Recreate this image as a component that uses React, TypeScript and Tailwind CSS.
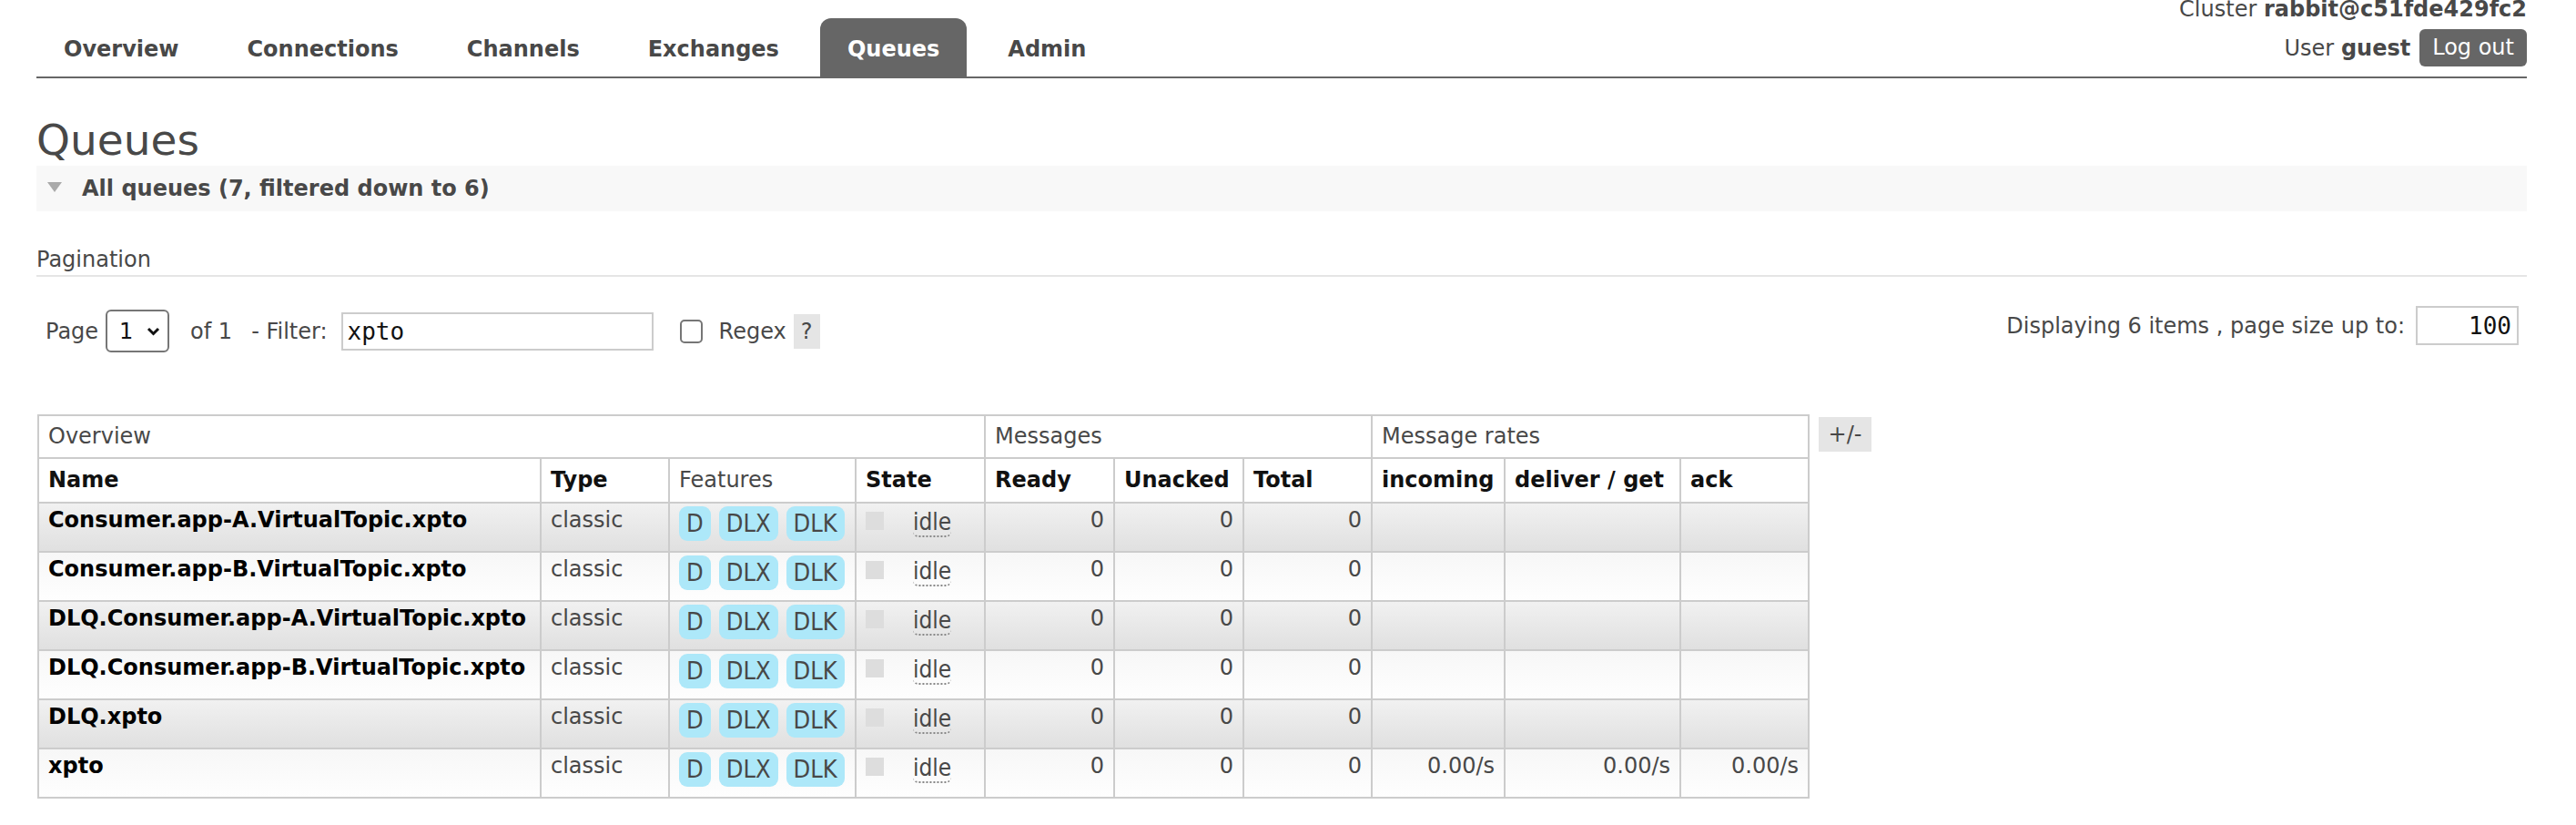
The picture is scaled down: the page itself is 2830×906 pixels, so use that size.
import clsx from "clsx";

const navItems = ["Overview", "Connections", "Channels", "Exchanges", "Queues", "Admin"];

const queues = [
  { name: "Consumer.app-A.VirtualTopic.xpto", rates: null },
  { name: "Consumer.app-B.VirtualTopic.xpto", rates: null },
  { name: "DLQ.Consumer.app-A.VirtualTopic.xpto", rates: null },
  { name: "DLQ.Consumer.app-B.VirtualTopic.xpto", rates: null },
  { name: "DLQ.xpto", rates: null },
  { name: "xpto", rates: ["0.00/s", "0.00/s", "0.00/s"] },
];

const features = ["D", "DLX", "DLK"];

export default function App() {
  return (
    <div className="min-h-[906px] bg-white font-['DejaVu_Sans',sans-serif] text-[24px] text-[#484848]">
      <div className="ml-[40px] w-[2736px]">
        {/* Header / menu */}
        <header className="flex items-end justify-between border-b-2 border-[#666]">
          <nav className="flex gap-[15px]">
            {navItems.map((item) => (
              <span
                key={item}
                className={clsx(
                  "rounded-t-[12px] px-[30px] pt-[20px] pb-[16px] font-bold leading-[28px]",
                  item === "Queues" ? "bg-[#666] text-white" : "text-[#484848]"
                )}
              >
                {item}
              </span>
            ))}
          </nav>
          <div className="flex flex-col items-end pb-[11px]">
            <div className="leading-[20px]">
              Cluster <b>rabbit@c51fde429fc2</b>
            </div>
            <div className="mt-[12px] flex items-center gap-[10px]">
              <span className="leading-[28px]">
                User <b>guest</b>
              </span>
              <span className="h-[41px] rounded-[6px] bg-[#666] px-[14px] leading-[41px] text-white">
                Log out
              </span>
            </div>
          </div>
        </header>

        <h1 className="mt-[44px] text-[47px] leading-[47px] font-normal">Queues</h1>

        {/* Section toggle */}
        <div className="mt-[5px] flex h-[50px] items-center bg-[#f8f8f8] pl-[12px] font-bold">
          <svg width="16" height="11" viewBox="0 0 16 11" className="mb-[4px]">
            <polygon points="0,0 16,0 8,11" fill="#aaa" />
          </svg>
          <span className="ml-[22px] leading-[28px]">All queues (7, filtered down to 6)</span>
        </div>

        {/* Pagination */}
        <h3 className="mt-[40px] border-b-2 border-[#e5e5e5] pb-[4px] text-[24px] leading-[26px] font-normal">
          Pagination
        </h3>

        <div className="flex items-start justify-between">
          <div className="mt-[36px] flex h-[47px] items-center pl-[10px] leading-[28px]">
            <span>Page</span>
            <div className="ml-[8px] flex h-[47px] w-[70px] items-center rounded-[6px] border-2 border-[#767676] pl-[13px] text-[#111]">
              <span>1</span>
              <svg width="15" height="10" viewBox="0 0 15 10" className="ml-[15px]">
                <path d="M2 2 L7.5 7.5 L13 2" fill="none" stroke="#111" strokeWidth="3" />
              </svg>
            </div>
            <span className="ml-[23px]">of 1</span>
            <span className="ml-[21px]">- Filter:</span>
            <div className="ml-[15px] flex h-[42px] w-[343px] items-center border-2 border-[#ccc] pl-[5px] font-['DejaVu_Sans_Mono',monospace] text-[26px] text-[#111]">
              xpto
            </div>
            <div className="ml-[29px] h-[26px] w-[25px] rounded-[5px] border-2 border-[#767676]" />
            <span className="ml-[18px]">Regex</span>
            <span className="ml-[8px] flex h-[38px] w-[29px] items-center justify-center bg-[#e5e5e5]">?</span>
          </div>

          <div className="mt-[32px] flex h-[43px] items-center pr-[9px] leading-[28px]">
            <span>Displaying 6 items , page size up to:</span>
            <div className="ml-[12px] flex h-[43px] w-[113px] items-center justify-end border-2 border-[#ccc] pr-[6px] font-['DejaVu_Sans_Mono',monospace] text-[26px] text-[#111]">
              100
            </div>
          </div>
        </div>

        {/* Queues table */}
        <div className="mt-[68px] flex items-start">
          <table className="ml-px w-[1947px] table-fixed border-collapse border-2 border-[#ccc] leading-[28px]">
            <colgroup>
              <col className="w-[552px]" />
              <col className="w-[141px]" />
              <col className="w-[205px]" />
              <col className="w-[142px]" />
              <col className="w-[142px]" />
              <col className="w-[142px]" />
              <col className="w-[141px]" />
              <col className="w-[146px]" />
              <col className="w-[193px]" />
              <col className="w-[141px]" />
            </colgroup>
            <thead>
              <tr className="text-left">
                <th colSpan={4} className="border-2 border-[#ccc] px-[10px] pt-[8px] pb-[9px] font-normal">
                  Overview
                </th>
                <th colSpan={3} className="border-2 border-[#ccc] px-[10px] pt-[8px] pb-[9px] font-normal">
                  Messages
                </th>
                <th colSpan={3} className="border-2 border-[#ccc] px-[10px] pt-[8px] pb-[9px] font-normal">
                  Message rates
                </th>
              </tr>
              <tr className="text-left text-[#111]">
                {["Name", "Type", "Features", "State", "Ready", "Unacked", "Total", "incoming", "deliver / get", "ack"].map(
                  (h) => (
                    <th
                      key={h}
                      className={clsx(
                        "border-2 border-[#ccc] px-[10px] pt-[9px] pb-[10px] whitespace-nowrap",
                        h === "Features" ? "font-normal text-[#484848]" : "font-bold"
                      )}
                    >
                      {h}
                    </th>
                  )
                )}
              </tr>
            </thead>
            <tbody>
              {queues.map((q, i) => {
                const bg =
                  i % 2 === 0
                    ? "bg-linear-to-b from-[#f1f1f1] to-[#e0e0e0]"
                    : "bg-linear-to-b from-[#f7f7f7] to-[#fefefe]";
                return (
                  <tr key={q.name}>
                    <td className={clsx(bg, "border-2 border-[#ccc] px-[10px] pt-[4px] align-top font-bold whitespace-nowrap text-black")}>
                      {q.name}
                    </td>
                    <td className={clsx(bg, "border-2 border-[#ccc] px-[10px] pt-[4px] align-top")}>classic</td>
                    <td className={clsx(bg, "border-2 border-[#ccc] pl-[10px] pt-[3px] pb-[11px] align-top")}>
                      <div className="flex gap-[9px] font-['DejaVu_Sans_Condensed','DejaVu_Sans',sans-serif] text-[27px]">
                        {features.map((f) => (
                          <span key={f} className="h-[38px] rounded-[9px] bg-[#ade8f9] px-[8px] leading-[38px]">
                            {f}
                          </span>
                        ))}
                      </div>
                    </td>
                    <td className={clsx(bg, "border-2 border-[#ccc] pl-[10px] pt-[5px] align-top")}>
                      <div className="flex items-start">
                        <span className="mt-[4px] h-[20px] w-[20px] bg-[#ddd]" />
                        <span className="ml-[32px] rounded-b-[6px] border-b-2 border-dotted border-[#888] font-['DejaVu_Sans_Condensed','DejaVu_Sans',sans-serif] text-[26px] leading-[30px]">
                          idle
                        </span>
                      </div>
                    </td>
                    {["0", "0", "0"].map((n, k) => (
                      <td key={k} className={clsx(bg, "border-2 border-[#ccc] pr-[10px] pt-[4px] text-right align-top")}>
                        {n}
                      </td>
                    ))}
                    {[0, 1, 2].map((k) => (
                      <td key={`r${k}`} className={clsx(bg, "border-2 border-[#ccc] pr-[10px] pt-[4px] text-right align-top")}>
                        {q.rates ? q.rates[k] : ""}
                      </td>
                    ))}
                  </tr>
                );
              })}
            </tbody>
          </table>
          <span className="mt-[3px] ml-[10px] flex h-[38px] w-[58px] items-center justify-center bg-[#e5e5e5] leading-[28px]">
            +/-
          </span>
        </div>
      </div>
    </div>
  );
}
